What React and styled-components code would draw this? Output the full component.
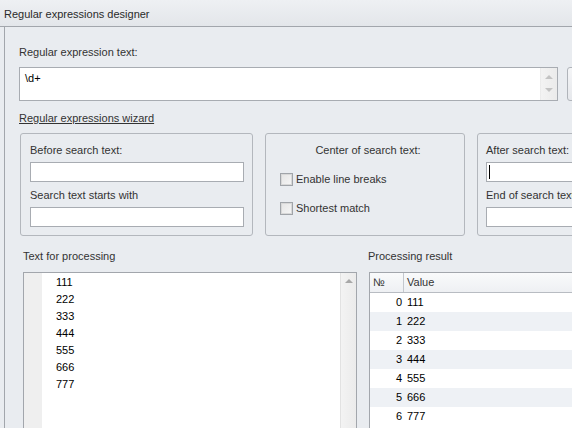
import React from 'react';
import styled, { createGlobalStyle } from 'styled-components';

const Global = createGlobalStyle`
  html, body { margin: 0; padding: 0; width: 572px; height: 428px; overflow: hidden; background: #e9ecf0; }
  body { font-family: "Liberation Sans", Arial, sans-serif; font-size: 11px; color: #333; }
  * { box-sizing: border-box; }
`;

const Window = styled.div`
  width: 760px;
  height: 428px;
  display: flex;
  flex-direction: column;
  background: #e9ecf0;
`;

const TitleBar = styled.div`
  height: 27px;
  flex: none;
  border-bottom: 1px solid #a2a6ac;
  background: linear-gradient(#eef0f3, #e3e6ea);
  padding: 7px 4px 0;
  line-height: 14px;
  font-size: 11px;
  color: #2a2a2a;
`;

const Panel = styled.div`
  flex: 1;
  margin-left: 4px;
  border-left: 1px solid #a2a6ac;
  padding: 18px 0 0 14px;
  display: flex;
  flex-direction: column;
  min-height: 0;
`;

const Label = styled.div`
  line-height: 14px;
  height: 14px;
  white-space: nowrap;
  color: #333;
  text-align: ${p => (p.$center ? 'center' : 'left')};
`;

const RegexRow = styled.div`
  display: flex;
  gap: 9px;
  margin-top: 8px;
  height: 34px;
`;

const RegexBox = styled.div`
  width: 539px;
  height: 34px;
  border: 1px solid #a8acb2;
  background: #fff;
  display: flex;
`;

const RegexText = styled.div`
  flex: 1;
  padding: 3px 0 0 5px;
  line-height: 14px;
  color: #000;
`;

const VScroll = styled.div`
  width: ${p => p.$w || 17}px;
  flex: none;
  background: linear-gradient(to right, #f3f3f3, #ebebeb);
  display: flex;
  flex-direction: column;
  align-items: center;
  justify-content: ${p => (p.$top ? 'flex-start' : 'space-between')};
  padding: ${p => (p.$top ? '6px 0 0' : '7px 0 8px')};
  border-left: 1px solid ${p => (p.$top ? '#e2e2e2' : 'transparent')};
`;

const Arrow = styled.span`
  width: 0;
  height: 0;
  border-left: 4px solid transparent;
  border-right: 4px solid transparent;
  ${p => (p.$down ? 'border-top: 4px solid #c3c3c3;' : `border-bottom: 4px solid ${p.$dark ? '#a8a8a8' : '#c3c3c3'};`)}
`;

const SideButton = styled.div`
  width: 60px;
  height: 34px;
  border: 1px solid #b0b4ba;
  border-radius: 3px;
  background: linear-gradient(#f4f5f7, #e6e8ec);
`;

const WizardLink = styled.a`
  margin-top: 10px;
  line-height: 14px;
  height: 14px;
  color: #333;
  text-decoration: underline;
  align-self: flex-start;
`;

const Groups = styled.div`
  display: flex;
  gap: 12px;
  margin: 8px 0 0 1px;
`;

const Group = styled.div`
  width: ${p => p.$w}px;
  height: 103px;
  flex: none;
  border: 1px solid #b3b7bd;
  border-radius: 3px;
  padding: 9px 8px 0 ${p => p.$pl || 9}px;
  display: flex;
  flex-direction: column;
`;

const Input = styled.div`
  width: 214px;
  height: 20px;
  margin: 5px 0 6px;
  border: 1px solid #a8acb2;
  background: #fff;
  position: relative;
`;

const Caret = styled.span`
  position: absolute;
  left: 2px;
  top: 2px;
  width: 1px;
  height: 14px;
  background: #000;
`;

const CheckRow = styled.label`
  display: flex;
  align-items: center;
  gap: 3px;
  height: 13px;
  margin-top: ${p => p.$mt}px;
  line-height: 13px;
  color: #333;
`;

const CheckBox = styled.span`
  width: 13px;
  height: 13px;
  flex: none;
  border: 1px solid #a0a4a9;
  background: linear-gradient(135deg, #e4e4e4, #f6f6f6);
  box-shadow: inset 0 0 0 1px #d8d8d8;
`;

const Bottom = styled.div`
  display: flex;
  margin-top: 13px;
  flex: 1;
  min-height: 0;
`;

const Column = styled.div`
  display: flex;
  flex-direction: column;
  width: ${p => (p.$w ? `${p.$w}px` : 'auto')};
  flex: ${p => (p.$w ? 'none' : '1')};
  margin-left: ${p => p.$ml}px;
`;

const Editor = styled.div`
  margin-top: 9px;
  flex: 1;
  border: 1px solid #a2a6ac;
  border-bottom: none;
  background: #fff;
  display: flex;
`;

const Gutter = styled.div`
  width: 18px;
  background: #efefef;
  flex: none;
`;

const Lines = styled.div`
  flex: 1;
  padding: 1px 0 0 14px;
  line-height: 17px;
  color: #000;
`;

const Grid = styled.div`
  margin: 9px 0 0 1px;
  flex: 1;
  border: 1px solid #a2a6ac;
  border-bottom: none;
  border-right: none;
  background: #fff;
`;

const Row = styled.div`
  display: grid;
  grid-template-columns: 34px 1fr;
  height: ${p => (p.$head ? 20 : 19)}px;
  line-height: 19px;
  background: ${p => (p.$head ? 'linear-gradient(#f9fafb, #eef0f3)' : p.$alt ? '#eef1f5' : '#fff')};
  border-bottom: ${p => (p.$head ? '1px solid #b8bcc2' : 'none')};
  color: ${p => (p.$head ? '#333' : '#000')};
`;

const NumCell = styled.div`
  text-align: ${p => (p.$head ? 'left' : 'right')};
  padding: ${p => (p.$head ? '0 0 0 3px' : '0 2px 0 0')};
  border-right: ${p => (p.$head ? '1px solid #c4c8ce' : 'none')};
`;

const ValueCell = styled.div`
  padding-left: 3px;
`;

const values = ['111', '222', '333', '444', '555', '666', '777'];

export default function App() {
  return (
    <>
      <Global />
      <Window>
        <TitleBar>Regular expressions designer</TitleBar>
        <Panel>
          <Label>Regular expression text:</Label>
          <RegexRow>
            <RegexBox>
              <RegexText>\d+</RegexText>
              <VScroll>
                <Arrow />
                <Arrow $down />
              </VScroll>
            </RegexBox>
            <SideButton />
          </RegexRow>
          <WizardLink>Regular expressions wizard</WizardLink>
          <Groups>
            <Group $w={233}>
              <Label>Before search text:</Label>
              <Input />
              <Label>Search text starts with</Label>
              <Input />
            </Group>
            <Group $w={200} $pl={14}>
              <Label $center>Center of search text:</Label>
              <CheckRow $mt={16}>
                <CheckBox />
                Enable line breaks
              </CheckRow>
              <CheckRow $mt={16}>
                <CheckBox />
                Shortest match
              </CheckRow>
            </Group>
            <Group $w={233} $pl={8}>
              <Label>After search text:</Label>
              <Input>
                <Caret />
              </Input>
              <Label>End of search text:</Label>
              <Input />
            </Group>
          </Groups>
          <Bottom>
            <Column $w={334} $ml={4}>
              <Label>Text for processing</Label>
              <Editor>
                <Gutter />
                <Lines>
                  {values.map(v => (
                    <div key={v}>{v}</div>
                  ))}
                </Lines>
                <VScroll $w={16} $top>
                  <Arrow $dark />
                </VScroll>
              </Editor>
            </Column>
            <Column $ml={11}>
              <Label>Processing result</Label>
              <Grid>
                <Row $head>
                  <NumCell $head>№</NumCell>
                  <ValueCell>Value</ValueCell>
                </Row>
                {values.map((v, i) => (
                  <Row key={v} $alt={i % 2 === 1}>
                    <NumCell>{i}</NumCell>
                    <ValueCell>{v}</ValueCell>
                  </Row>
                ))}
              </Grid>
            </Column>
          </Bottom>
        </Panel>
      </Window>
    </>
  );
}
